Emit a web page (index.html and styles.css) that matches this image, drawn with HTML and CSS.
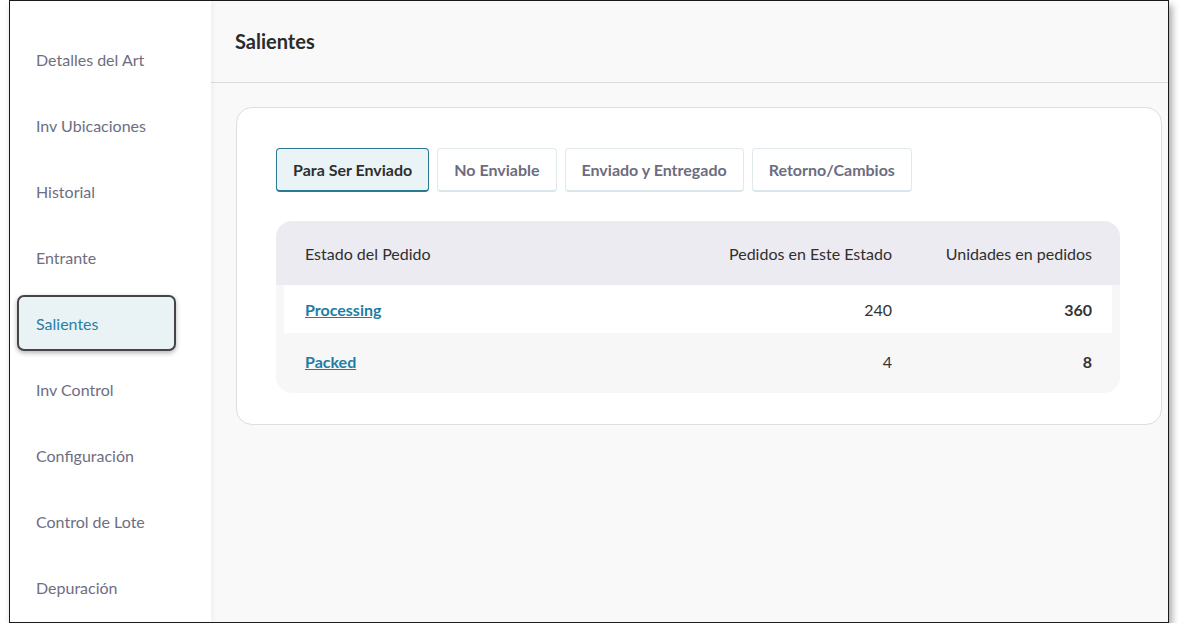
FILE: index.html
```html
<!DOCTYPE html>
<html lang="es">
<head>
    <meta charset="UTF-8">
    <title>Salientes</title>
    <link rel="stylesheet" href="styles.css">
</head>
<body>
    <div class="frame">
        <nav class="sidebar">
            <a class="nav-item">Detalles del Art</a>
            <a class="nav-item">Inv Ubicaciones</a>
            <a class="nav-item">Historial</a>
            <a class="nav-item">Entrante</a>
            <a class="nav-item active">Salientes</a>
            <a class="nav-item">Inv Control</a>
            <a class="nav-item">Configuración</a>
            <a class="nav-item">Control de Lote</a>
            <a class="nav-item">Depuración</a>
        </nav>
        <main class="main">
            <header class="page-header">
                <h1>Salientes</h1>
            </header>
            <section class="card">
                <div class="tabs">
                    <span class="tab active">Para Ser Enviado</span>
                    <span class="tab">No Enviable</span>
                    <span class="tab">Enviado y Entregado</span>
                    <span class="tab">Retorno/Cambios</span>
                </div>
                <div class="orders">
                    <div class="orders-head">
                        <span>Estado del Pedido</span>
                        <span class="num">Pedidos en Este Estado</span>
                        <span class="num">Unidades en pedidos</span>
                    </div>
                    <div class="orders-row white">
                        <a class="status-link" href="#">Processing</a>
                        <span class="num">240</span>
                        <span class="num bold">360</span>
                    </div>
                    <div class="orders-row last">
                        <a class="status-link" href="#">Packed</a>
                        <span class="num">4</span>
                        <span class="num bold">8</span>
                    </div>
                </div>
            </section>
        </main>
    </div>
</body>
</html>
```

FILE: styles.css
```css
body {
    margin: 0;
    padding: 0;
    background: #fff;
    font-family: Lato, "Open Sans", sans-serif;
    color: #333;
}

.frame {
    margin-left: 9px;
    width: 1160px;
    height: 623px;
    box-sizing: border-box;
    border: 1px solid #1a1a1a;
    box-shadow: 3px 5px 7px rgba(0, 0, 0, 0.35);
    display: flex;
    overflow: hidden;
}

.sidebar {
    width: 201px;
    flex-shrink: 0;
    background: #fff;
    box-shadow: 1px 0 6px rgba(0, 0, 0, 0.06);
    position: relative;
    z-index: 1;
    padding-top: 30px;
    display: flex;
    flex-direction: column;
    gap: 10px;
}

.nav-item {
    display: flex;
    align-items: center;
    box-sizing: border-box;
    height: 56px;
    width: 159px;
    margin-left: 7px;
    padding-left: 17px;
    border: 2px solid transparent;
    border-radius: 7px;
    font-size: 16px;
    color: #6d6e82;
    cursor: pointer;
}

.nav-item.active {
    background: #e9f2f5;
    border-color: #454545;
    color: #2c7fa0;
    box-shadow: 0 2px 5px rgba(0, 0, 0, 0.3);
}

.main {
    flex: 1;
    background: #f9f9f9;
    display: flex;
    flex-direction: column;
}

.page-header {
    height: 82px;
    box-sizing: border-box;
    border-bottom: 1px solid #dcdcdc;
    display: flex;
    align-items: center;
    padding: 0 0 2px 24px;
}

.page-header h1 {
    margin: 0;
    font-size: 20px;
    font-weight: 700;
    color: #2b2b2b;
}

.card {
    margin: 24px 6px 0 25px;
    height: 318px;
    box-sizing: border-box;
    background: #fff;
    border: 1px solid #dedede;
    border-radius: 16px;
    padding: 40px 41px 0 39px;
}

.tabs {
    display: flex;
    gap: 8px;
}

.tab {
    box-sizing: border-box;
    height: 44px;
    padding: 0 16px 1px;
    display: flex;
    align-items: center;
    border: 1px solid #e0e9ec;
    border-bottom: 2px solid #d9e6eb;
    border-radius: 4px;
    background: #fff;
    font-size: 16px;
    font-weight: 700;
    color: #6c6d80;
    cursor: pointer;
}

.tab.active {
    background: #eaf3f6;
    border-color: #2b7893;
    color: #2f2f2f;
}

.orders {
    margin-top: 29px;
    background: #f7f7f8;
    border-radius: 16px;
    padding: 0 8px 4px;
    font-size: 16px;
}

.orders-head,
.orders-row {
    display: grid;
    grid-template-columns: 1fr 200px 200px;
    align-items: center;
}

.orders-head {
    height: 64px;
    margin: 0 -8px;
    padding: 0 28px 0 29px;
    background: #ecebf1;
    border-radius: 16px 16px 0 0;
    color: #2f2f2f;
}

.orders-row {
    height: 48px;
    padding: 0 20px 0 21px;
    color: #333;
}

.orders-row.white {
    background: #fff;
}

.orders-row.last {
    height: 56px;
}

.num {
    text-align: right;
}

.bold {
    font-weight: 700;
}

.status-link {
    color: #1b7ea6;
    font-weight: 700;
    text-decoration: underline;
}
```
